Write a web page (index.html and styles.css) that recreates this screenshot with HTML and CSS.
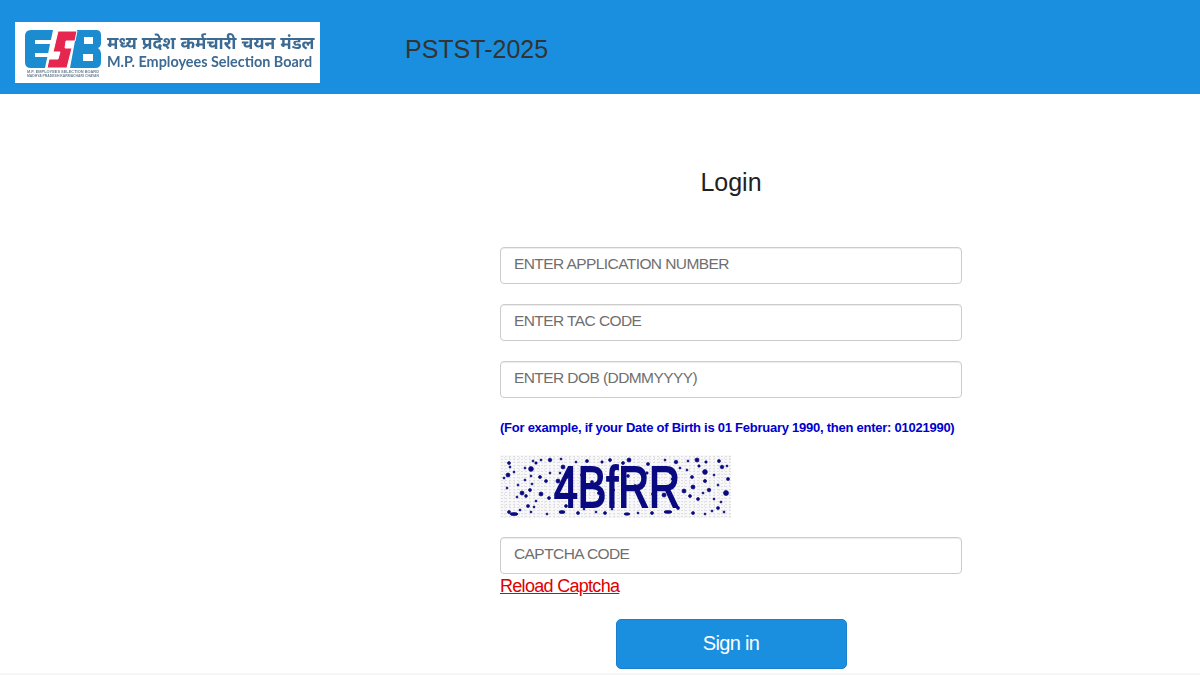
FILE: index.html
```html
<!DOCTYPE html>
<html lang="en">
<head>
    <meta charset="UTF-8">
    <title>PSTST-2025</title>
    <link rel="stylesheet" href="styles.css">
</head>
<body>
    <div class="header">
        <div class="logo">
            <svg class="logo-mark" width="78" height="52" viewBox="0 0 78 52">
                <!-- E -->
                <path fill="#1a8ccf" d="M7 1h22l-8 38H7q-6 0-6-6V7q0-6 6-6z"/>
                <rect fill="#fff" x="11" y="11" width="16" height="4"/>
                <rect fill="#fff" x="11" y="24" width="13" height="4"/>
                <!-- B -->
                <path fill="#1a8ccf" d="M53 1h19q5 0 5 5v8q0 4-3 5q3 2 3 5v9q0 6-6 6H46z"/>
                <rect fill="#fff" x="60" y="8" width="9" height="7"/>
                <rect fill="#fff" x="59" y="25" width="10" height="7"/>
                <!-- S -->
                <path fill="#e6264f" stroke="#fff" stroke-width="1" d="M34 2h19l-2 10H42l-1 7h7l-5 20H23l2-9h9l2-7h-7z"/>
                <text class="mark-small" x="3" y="44" textLength="72" lengthAdjust="spacingAndGlyphs">M.P. EMPLOYEES SELECTION BOARD</text>
                <text class="mark-small" x="3" y="48" textLength="72" lengthAdjust="spacingAndGlyphs">MADHYA PRADESH KARMACHARI CHAYAN</text>
            </svg>
            <div class="logo-text">
                <div class="logo-hi">मध्य प्रदेश कर्मचारी चयन मंडल</div>
                <div class="logo-en">M.P. Employees Selection Board</div>
            </div>
        </div>
        <h1 class="exam">PSTST-2025</h1>
    </div>

    <div class="login">
        <h2>Login</h2>
        <form>
            <input class="field" type="text" placeholder="ENTER APPLICATION NUMBER">
            <input class="field" type="text" placeholder="ENTER TAC CODE">
            <input class="field" type="text" placeholder="ENTER DOB (DDMMYYYY)">
            <p class="hint">(For example, if your Date of Birth is 01 February 1990, then enter: 01021990)</p>
            <div class="captcha">
                <svg width="231" height="63" viewBox="0 0 231 63" fill="#0a0a80">
                    <circle cx="9" cy="8" r="1.5"/><circle cx="10" cy="12" r="1"/><circle cx="33" cy="6" r="1"/><circle cx="36" cy="8" r="1.2"/><circle cx="41" cy="5" r="1"/><circle cx="50" cy="5" r="1.8"/><circle cx="31" cy="14" r="2.4"/><circle cx="25" cy="13" r="1"/><circle cx="61" cy="4" r="1"/><circle cx="63" cy="12" r="2"/><circle cx="76" cy="7" r="1"/><circle cx="87" cy="6" r="1.5"/><circle cx="88" cy="14" r="1"/><circle cx="102" cy="7" r="1.2"/><circle cx="110" cy="5" r="1.5"/><circle cx="123" cy="8" r="1.5"/><circle cx="129" cy="5" r="2"/><circle cx="148" cy="9" r="1.5"/><circle cx="165" cy="5" r="1"/><circle cx="176" cy="7" r="1.8"/><circle cx="188" cy="6" r="1"/><circle cx="197" cy="5" r="2"/><circle cx="206" cy="7" r="1.2"/><circle cx="219" cy="6" r="1.5"/><circle cx="227" cy="11" r="1"/>
                    <circle cx="8" cy="20" r="2"/><circle cx="4" cy="23" r="1"/><circle cx="14" cy="17" r="1"/><circle cx="40" cy="22" r="1.5"/><circle cx="46" cy="26" r="1.5"/><circle cx="50" cy="18" r="1"/><circle cx="58" cy="26" r="2"/><circle cx="60" cy="18" r="1"/><circle cx="25" cy="25" r="1"/><circle cx="31" cy="21" r="1"/><circle cx="205" cy="17" r="2.4"/><circle cx="222" cy="12" r="1.8"/><circle cx="214" cy="20" r="1"/><circle cx="192" cy="22" r="1.5"/><circle cx="180" cy="13" r="1"/><circle cx="171" cy="17" r="2"/><circle cx="187" cy="15" r="1"/><circle cx="199" cy="11" r="1.2"/><circle cx="228" cy="24" r="1.5"/><circle cx="205" cy="26" r="1.6"/>
                    <circle cx="18" cy="30" r="1"/><circle cx="30" cy="35" r="1.5"/><circle cx="32" cy="29" r="1"/><circle cx="58" cy="38" r="1.6"/><circle cx="7" cy="33" r="1"/><circle cx="22" cy="38" r="2"/><circle cx="26" cy="41" r="1.4"/><circle cx="41" cy="39" r="2"/><circle cx="49" cy="43" r="1.5"/><circle cx="36" cy="46" r="1"/><circle cx="17" cy="42" r="1"/><circle cx="193" cy="32" r="2"/><circle cx="209" cy="35" r="1.8"/><circle cx="218" cy="30" r="1"/><circle cx="226" cy="38" r="2.5"/><circle cx="198" cy="44" r="1.5"/><circle cx="214" cy="44" r="1"/><circle cx="184" cy="36" r="2"/><circle cx="190" cy="41" r="1.5"/><circle cx="203" cy="38" r="1"/><circle cx="221" cy="47" r="1"/>
                    <circle cx="28" cy="51" r="1.5"/><circle cx="9" cy="57" r="1.5"/><ellipse cx="14" cy="59" rx="4" ry="1.5"/><circle cx="20" cy="55" r="1"/><circle cx="31" cy="57" r="1"/><circle cx="34" cy="52" r="1"/><circle cx="47" cy="59" r="1"/><ellipse cx="62" cy="57" rx="3" ry="1.5"/><circle cx="66" cy="51" r="1.5"/><circle cx="78" cy="58" r="1.5"/><circle cx="84" cy="54" r="1"/><circle cx="96" cy="57" r="1"/><circle cx="105" cy="58" r="1.5"/><circle cx="112" cy="54" r="1"/><ellipse cx="127" cy="59" rx="3" ry="1.2"/><circle cx="138" cy="58" r="1"/><ellipse cx="168" cy="57" rx="4" ry="1.4"/><circle cx="152" cy="58" r="1.5"/><circle cx="178" cy="53" r="1.5"/><circle cx="193" cy="58" r="1.5"/><circle cx="205" cy="59" r="1"/><circle cx="218" cy="53" r="1.5"/><circle cx="224" cy="57" r="1"/><circle cx="212" cy="56" r="1"/>
                    <text class="captcha-text" x="54" y="52" textLength="126" lengthAdjust="spacingAndGlyphs">4BfRR</text>
                    <circle cx="67" cy="22" r="1.4"/><circle cx="92" cy="27" r="1.5"/><circle cx="82" cy="20" r="1.5"/><circle cx="99" cy="38" r="1.6"/><circle cx="113" cy="35" r="1.6"/><circle cx="112" cy="48" r="2"/><circle cx="128" cy="21" r="1.4"/><circle cx="135" cy="31" r="1.5"/><circle cx="153" cy="39" r="1.5"/><circle cx="164" cy="40" r="2"/><circle cx="147" cy="18" r="1.2"/><circle cx="172" cy="24" r="1"/>
                </svg>
            </div>
            <input class="field" type="text" placeholder="CAPTCHA CODE">
            <a class="reload" href="#">Reload Captcha</a>
            <button class="signin" type="button">Sign in</button>
        </form>
    </div>
    <div class="bottom"></div>
</body>
</html>
```

FILE: styles.css
```css
* {
    box-sizing: border-box;
}
html, body {
    margin: 0;
    padding: 0;
    height: 675px;
    overflow: hidden;
}
body {
    background-color: #fff;
    font-family: "Liberation Sans", Arial, sans-serif;
    display: flex;
    flex-direction: column;
}

.header {
    height: 94px;
    flex: none;
    background-color: #1a8fe0;
    display: flex;
    align-items: center;
    padding: 0 0 0 15px;
}
.logo {
    width: 305px;
    height: 61px;
    margin-top: 10px;
    background-color: #fff;
    display: flex;
    align-items: center;
    padding: 5px 4px 0 9px;
    gap: 5px;
}
.logo-mark {
    flex: none;
    filter: blur(.4px);
}
.mark-small {
    font-family: "Liberation Sans", sans-serif;
    font-size: 3.6px;
    font-weight: bold;
    fill: #6f8194;
}
.logo-text {
    color: #3d6a93;
    font-weight: bold;
    white-space: nowrap;
    filter: blur(.35px);
    margin-top: -5px;
}
.logo-hi {
    font-family: "Liberation Sans", "Noto Sans", sans-serif;
    font-size: 17.5px;
    line-height: 19px;
}
.logo-en {
    font-family: "Lato", "Open Sans", sans-serif;
    font-size: 14.4px;
    line-height: 17px;
}
.exam {
    margin: 4px 0 0 85px;
    font-size: 25px;
    font-weight: normal;
    color: #333;
}

.login {
    width: 462px;
    margin-left: 500px;
    flex: 1;
}
.login h2 {
    margin: 72px 0 48px;
    height: 33px;
    font-size: 25px;
    line-height: 33px;
    font-weight: normal;
    text-align: center;
    color: #222;
}
.field {
    display: block;
    width: 100%;
    height: 37px;
    margin-bottom: 20px;
    padding: 0 13px 3px;
    border: 1px solid #ccc;
    border-radius: 4px;
    box-shadow: inset 0 1px 1px rgba(0, 0, 0, .075);
    background-color: #fff;
    font-family: "Liberation Sans", Arial, sans-serif;
    font-size: 15.5px;
    letter-spacing: -.58px;
}
.field::placeholder {
    color: #6f6f6f;
    opacity: 1;
}
.hint {
    margin: 0;
    height: 20px;
    font-size: 13px;
    line-height: 20px;
    font-weight: bold;
    letter-spacing: -.25px;
    color: #0000cd;
    white-space: nowrap;
}
.captcha {
    width: 231px;
    height: 63px;
    margin: 17px 0 19px;
    background-color: #f8f8f8;
    background-image: radial-gradient(#dedee4 .6px, transparent .8px), radial-gradient(#e2e2e8 .6px, transparent .8px);
    background-size: 4px 3px, 5px 4px;
    background-position: 0 0, 2px 1px;
}
.captcha svg {
    display: block;
}
.captcha circle, .captcha ellipse {
    stroke: #0a0a80;
    stroke-width: .7;
}
.captcha-text {
    font-family: "Liberation Sans", sans-serif;
    font-size: 58px;
    fill: #0a0a80;
    stroke: #0a0a80;
    stroke-width: 2;
}
.captcha + .field {
    margin-bottom: 2px;
}
.reload {
    display: block;
    width: max-content;
    font-size: 18px;
    line-height: 21px;
    letter-spacing: -.7px;
    color: #e00000;
    text-decoration: underline;
}
.signin {
    display: block;
    width: 231px;
    height: 50px;
    margin: 22px auto 0;
    padding-bottom: 2px;
    border: 1px solid #1a80cc;
    border-radius: 5px;
    background-color: #1a8fe0;
    color: #fff;
    font-family: "Liberation Sans", Arial, sans-serif;
    font-size: 20px;
    letter-spacing: -.7px;
}
.bottom {
    height: 2px;
    flex: none;
    background-color: #f6f6f6;
}
```
